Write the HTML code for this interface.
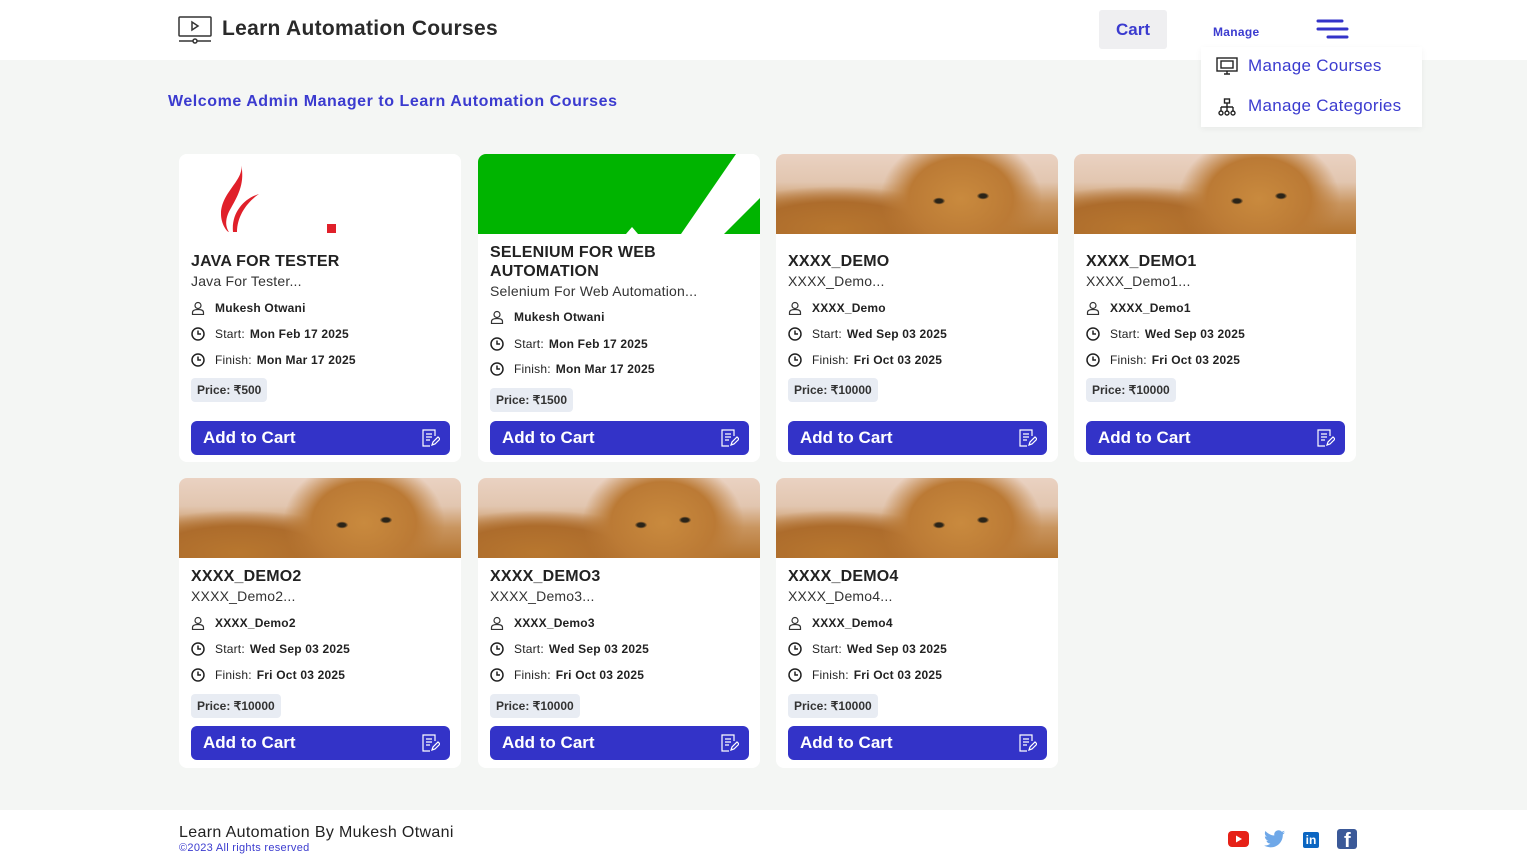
<!DOCTYPE html>
<html><head><meta charset="utf-8"><style>
*{box-sizing:border-box;margin:0;padding:0}
body{width:1527px;height:866px;background:#f4f6f4;font-family:"Liberation Sans",sans-serif;position:relative;overflow:hidden;color:#222}
.hdr{position:absolute;left:0;top:0;width:1527px;height:60px;background:#fff}
.logo{position:absolute;left:178px;top:16px}
.brand{position:absolute;left:222px;top:17px;font-size:21px;font-weight:bold;color:#2a2a2a;letter-spacing:0.3px}
.cart{position:absolute;left:1099px;top:10px;width:68px;height:39px;background:#efeff1;border-radius:3px;color:#3b3bcf;font-weight:bold;font-size:17px;text-align:center;line-height:39px}
.manage{position:absolute;left:1213px;top:25px;font-size:12px;color:#3b3bcf;font-weight:bold;letter-spacing:0.3px}
.ham{position:absolute;left:1316px;top:19px}
.dd{position:absolute;left:1201px;top:47px;width:221px;height:80px;background:#fff;box-shadow:0 2px 6px rgba(0,0,0,.05)}
.dd div{position:absolute;left:47px;font-size:17px;color:#3b3bcf;letter-spacing:0.3px}
.welcome{position:absolute;left:168px;top:93px;font-size:16px;font-weight:bold;color:#3b3bcf;letter-spacing:0.55px}
.card{position:absolute;width:282px;background:#fff;border-radius:8px;overflow:hidden}
.img{position:absolute;left:0;top:0;width:282px;height:80px}
.lion{background:
radial-gradient(ellipse 9px 5px at 163px 47px,#2b2418 40%,transparent 70%),
radial-gradient(ellipse 9px 5px at 207px 42px,#2b2418 40%,transparent 70%),
radial-gradient(ellipse 95px 75px at 185px 45px,#c98a3e 0%,#bb7a35 55%,transparent 85%),
radial-gradient(ellipse 140px 45px at 60px 75px,#b8772f 0%,#ad6c2c 60%,transparent 95%),
linear-gradient(180deg,#ead2c2 0%,#e2c6b0 35%,#c9955f 62%,#b4742f 100%);}
.t{position:absolute;left:12px;font-size:16px;font-weight:bold;color:#222;line-height:19px;letter-spacing:0.2px}
.s{position:absolute;left:12px;font-size:14px;color:#333;letter-spacing:0.2px}
.r{position:absolute;left:12px;font-size:12px;color:#222;display:flex;align-items:center;letter-spacing:0.2px}
.r svg{margin-right:10px}
.r b{margin-left:5px}
.p{position:absolute;left:12px;height:24px;background:#e8ecf3;border-radius:4px;font-size:12px;font-weight:bold;padding:0 6px;line-height:24px;color:#333}
.btn{position:absolute;left:12px;width:259px;height:34px;background:#3333c8;border-radius:6px;color:#fff;font-size:17px;font-weight:bold;line-height:34px;padding-left:12px}
.btn svg{position:absolute;right:10px;top:8px}
.ftr{position:absolute;left:0;top:810px;width:1527px;height:56px;background:#fff}
</style></head><body>
<div class="hdr"></div>
<svg class="logo" width="34" height="28" viewBox="0 0 34 28" fill="none" stroke="#333" stroke-width="1.5"><rect x="1" y="1" width="32" height="19" rx="1"/><path d="M14 6v8l6-4z"/><path d="M1 25h32"/><circle cx="17" cy="25" r="2" fill="#fff"/></svg>
<div class="brand">Learn Automation Courses</div>
<div class="cart">Cart</div>
<div class="manage">Manage</div>
<svg class="ham" width="33" height="20" viewBox="0 0 33 20" stroke="#3333c8" stroke-width="3" stroke-linecap="round"><path d="M2 2h24M2 10h29M12 18h19"/></svg>
<div class="dd">
<svg style="position:absolute;left:15px;top:10px" width="22" height="20" viewBox="0 0 22 20" fill="none" stroke="#222" stroke-width="1.4"><rect x="1" y="1" width="20" height="13"/><rect x="5" y="4" width="12" height="7"/><path d="M8 17h6M11 14v3"/></svg>
<div style="top:9px">Manage Courses</div>
<svg style="position:absolute;left:17px;top:51px" width="18" height="18" viewBox="0 0 18 18" fill="none" stroke="#222" stroke-width="1.4"><rect x="6.5" y="1" width="5" height="4"/><path d="M9 5v4M3 9h12M3 9v4M9 9v4M15 9v4"/><circle cx="3" cy="15" r="2"/><circle cx="9" cy="15" r="2"/><circle cx="15" cy="15" r="2"/></svg>
<div style="top:49px">Manage Categories</div>
</div>
<div class="welcome">Welcome Admin Manager to Learn Automation Courses</div>

<div class="card" style="left:179px;top:154px;height:308px">
<svg class="img" viewBox="0 0 282 80"><rect width="282" height="80" fill="#fff"/><path d="M62 10c4 16-20 28-20 50 0 10 6 18 8 18-4-6-4-14 2-24 8-14 14-26 10-44z" fill="#e0202a"/><path d="M80 40c-14 4-28 18-26 38l4 0c0-16 10-30 22-38z" fill="#e0202a"/><rect x="148" y="70" width="9" height="9" fill="#e0202a"/></svg>
<div class="t" style="top:98px">JAVA FOR TESTER</div><div class="s" style="top:119px">Java For Tester...</div>
<div class="r" style="top:147px"><svg width="14" height="14" viewBox="0 0 14 14" fill="none" stroke="#333" stroke-width="1.2"><circle cx="7" cy="4.5" r="3"/><path d="M1.5 13.5v-2c0-2 2-3 5.5-3s5.5 1 5.5 3v2z"/></svg><b style="margin-left:0">Mukesh Otwani</b></div>
<div class="r" style="top:173px"><svg width="14" height="14" viewBox="0 0 14 14" fill="none" stroke="#222" stroke-width="1.5"><circle cx="7" cy="7" r="6"/><path d="M7 3.5V7h3"/></svg>Start: <b>Mon Feb 17 2025</b></div>
<div class="r" style="top:199px"><svg width="14" height="14" viewBox="0 0 14 14" fill="none" stroke="#222" stroke-width="1.5"><circle cx="7" cy="7" r="6"/><path d="M7 3.5V7h3"/></svg>Finish: <b>Mon Mar 17 2025</b></div>
<div class="p" style="top:224px">Price: ₹500</div>
<div class="btn" style="top:267px">Add to Cart<svg width="18" height="18" viewBox="0 0 18 18" fill="none" stroke="#fff" stroke-width="1.2"><path d="M13 7V1H1v16h7"/><path d="M4 5h6M4 8h6M4 11h4"/><path d="M10 16l1-3 5-5 2 2-5 5z"/></svg></div>
</div>

<div class="card" style="left:478px;top:154px;height:308px">
<svg class="img" viewBox="0 0 282 80"><rect width="282" height="80" fill="#fff"/><polygon points="0,0 258,0 203,80 0,80" fill="#00b400"/><polygon points="246,80 282,44 282,80" fill="#00b400"/><polygon points="148,80 154,73 160,80" fill="#fff"/></svg>
<div class="t" style="top:89px">SELENIUM FOR WEB<br>AUTOMATION</div><div class="s" style="top:129px">Selenium For Web Automation...</div>
<div class="r" style="top:156px"><svg width="14" height="14" viewBox="0 0 14 14" fill="none" stroke="#333" stroke-width="1.2"><circle cx="7" cy="4.5" r="3"/><path d="M1.5 13.5v-2c0-2 2-3 5.5-3s5.5 1 5.5 3v2z"/></svg><b style="margin-left:0">Mukesh Otwani</b></div>
<div class="r" style="top:183px"><svg width="14" height="14" viewBox="0 0 14 14" fill="none" stroke="#222" stroke-width="1.5"><circle cx="7" cy="7" r="6"/><path d="M7 3.5V7h3"/></svg>Start: <b>Mon Feb 17 2025</b></div>
<div class="r" style="top:208px"><svg width="14" height="14" viewBox="0 0 14 14" fill="none" stroke="#222" stroke-width="1.5"><circle cx="7" cy="7" r="6"/><path d="M7 3.5V7h3"/></svg>Finish: <b>Mon Mar 17 2025</b></div>
<div class="p" style="top:234px">Price: ₹1500</div>
<div class="btn" style="top:267px">Add to Cart<svg width="18" height="18" viewBox="0 0 18 18" fill="none" stroke="#fff" stroke-width="1.2"><path d="M13 7V1H1v16h7"/><path d="M4 5h6M4 8h6M4 11h4"/><path d="M10 16l1-3 5-5 2 2-5 5z"/></svg></div>
</div>

<div class="card" style="left:776px;top:154px;height:308px"><div class="img lion"></div>
<div class="t" style="top:98px">XXXX_DEMO</div><div class="s" style="top:119px">XXXX_Demo...</div>
<div class="r" style="top:147px"><svg width="14" height="14" viewBox="0 0 14 14" fill="none" stroke="#333" stroke-width="1.2"><circle cx="7" cy="4.5" r="3"/><path d="M1.5 13.5v-2c0-2 2-3 5.5-3s5.5 1 5.5 3v2z"/></svg><b style="margin-left:0">XXXX_Demo</b></div>
<div class="r" style="top:173px"><svg width="14" height="14" viewBox="0 0 14 14" fill="none" stroke="#222" stroke-width="1.5"><circle cx="7" cy="7" r="6"/><path d="M7 3.5V7h3"/></svg>Start: <b>Wed Sep 03 2025</b></div>
<div class="r" style="top:199px"><svg width="14" height="14" viewBox="0 0 14 14" fill="none" stroke="#222" stroke-width="1.5"><circle cx="7" cy="7" r="6"/><path d="M7 3.5V7h3"/></svg>Finish: <b>Fri Oct 03 2025</b></div>
<div class="p" style="top:224px">Price: ₹10000</div>
<div class="btn" style="top:267px">Add to Cart<svg width="18" height="18" viewBox="0 0 18 18" fill="none" stroke="#fff" stroke-width="1.2"><path d="M13 7V1H1v16h7"/><path d="M4 5h6M4 8h6M4 11h4"/><path d="M10 16l1-3 5-5 2 2-5 5z"/></svg></div>
</div>

<div class="card" style="left:1074px;top:154px;height:308px"><div class="img lion"></div>
<div class="t" style="top:98px">XXXX_DEMO1</div><div class="s" style="top:119px">XXXX_Demo1...</div>
<div class="r" style="top:147px"><svg width="14" height="14" viewBox="0 0 14 14" fill="none" stroke="#333" stroke-width="1.2"><circle cx="7" cy="4.5" r="3"/><path d="M1.5 13.5v-2c0-2 2-3 5.5-3s5.5 1 5.5 3v2z"/></svg><b style="margin-left:0">XXXX_Demo1</b></div>
<div class="r" style="top:173px"><svg width="14" height="14" viewBox="0 0 14 14" fill="none" stroke="#222" stroke-width="1.5"><circle cx="7" cy="7" r="6"/><path d="M7 3.5V7h3"/></svg>Start: <b>Wed Sep 03 2025</b></div>
<div class="r" style="top:199px"><svg width="14" height="14" viewBox="0 0 14 14" fill="none" stroke="#222" stroke-width="1.5"><circle cx="7" cy="7" r="6"/><path d="M7 3.5V7h3"/></svg>Finish: <b>Fri Oct 03 2025</b></div>
<div class="p" style="top:224px">Price: ₹10000</div>
<div class="btn" style="top:267px">Add to Cart<svg width="18" height="18" viewBox="0 0 18 18" fill="none" stroke="#fff" stroke-width="1.2"><path d="M13 7V1H1v16h7"/><path d="M4 5h6M4 8h6M4 11h4"/><path d="M10 16l1-3 5-5 2 2-5 5z"/></svg></div>
</div>

<div class="card" style="left:179px;top:478px;height:290px"><div class="img lion"></div>
<div class="t" style="top:89px">XXXX_DEMO2</div><div class="s" style="top:110px">XXXX_Demo2...</div>
<div class="r" style="top:138px"><svg width="14" height="14" viewBox="0 0 14 14" fill="none" stroke="#333" stroke-width="1.2"><circle cx="7" cy="4.5" r="3"/><path d="M1.5 13.5v-2c0-2 2-3 5.5-3s5.5 1 5.5 3v2z"/></svg><b style="margin-left:0">XXXX_Demo2</b></div>
<div class="r" style="top:164px"><svg width="14" height="14" viewBox="0 0 14 14" fill="none" stroke="#222" stroke-width="1.5"><circle cx="7" cy="7" r="6"/><path d="M7 3.5V7h3"/></svg>Start: <b>Wed Sep 03 2025</b></div>
<div class="r" style="top:190px"><svg width="14" height="14" viewBox="0 0 14 14" fill="none" stroke="#222" stroke-width="1.5"><circle cx="7" cy="7" r="6"/><path d="M7 3.5V7h3"/></svg>Finish: <b>Fri Oct 03 2025</b></div>
<div class="p" style="top:216px">Price: ₹10000</div>
<div class="btn" style="top:248px">Add to Cart<svg width="18" height="18" viewBox="0 0 18 18" fill="none" stroke="#fff" stroke-width="1.2"><path d="M13 7V1H1v16h7"/><path d="M4 5h6M4 8h6M4 11h4"/><path d="M10 16l1-3 5-5 2 2-5 5z"/></svg></div>
</div>

<div class="card" style="left:478px;top:478px;height:290px"><div class="img lion"></div>
<div class="t" style="top:89px">XXXX_DEMO3</div><div class="s" style="top:110px">XXXX_Demo3...</div>
<div class="r" style="top:138px"><svg width="14" height="14" viewBox="0 0 14 14" fill="none" stroke="#333" stroke-width="1.2"><circle cx="7" cy="4.5" r="3"/><path d="M1.5 13.5v-2c0-2 2-3 5.5-3s5.5 1 5.5 3v2z"/></svg><b style="margin-left:0">XXXX_Demo3</b></div>
<div class="r" style="top:164px"><svg width="14" height="14" viewBox="0 0 14 14" fill="none" stroke="#222" stroke-width="1.5"><circle cx="7" cy="7" r="6"/><path d="M7 3.5V7h3"/></svg>Start: <b>Wed Sep 03 2025</b></div>
<div class="r" style="top:190px"><svg width="14" height="14" viewBox="0 0 14 14" fill="none" stroke="#222" stroke-width="1.5"><circle cx="7" cy="7" r="6"/><path d="M7 3.5V7h3"/></svg>Finish: <b>Fri Oct 03 2025</b></div>
<div class="p" style="top:216px">Price: ₹10000</div>
<div class="btn" style="top:248px">Add to Cart<svg width="18" height="18" viewBox="0 0 18 18" fill="none" stroke="#fff" stroke-width="1.2"><path d="M13 7V1H1v16h7"/><path d="M4 5h6M4 8h6M4 11h4"/><path d="M10 16l1-3 5-5 2 2-5 5z"/></svg></div>
</div>

<div class="card" style="left:776px;top:478px;height:290px"><div class="img lion"></div>
<div class="t" style="top:89px">XXXX_DEMO4</div><div class="s" style="top:110px">XXXX_Demo4...</div>
<div class="r" style="top:138px"><svg width="14" height="14" viewBox="0 0 14 14" fill="none" stroke="#333" stroke-width="1.2"><circle cx="7" cy="4.5" r="3"/><path d="M1.5 13.5v-2c0-2 2-3 5.5-3s5.5 1 5.5 3v2z"/></svg><b style="margin-left:0">XXXX_Demo4</b></div>
<div class="r" style="top:164px"><svg width="14" height="14" viewBox="0 0 14 14" fill="none" stroke="#222" stroke-width="1.5"><circle cx="7" cy="7" r="6"/><path d="M7 3.5V7h3"/></svg>Start: <b>Wed Sep 03 2025</b></div>
<div class="r" style="top:190px"><svg width="14" height="14" viewBox="0 0 14 14" fill="none" stroke="#222" stroke-width="1.5"><circle cx="7" cy="7" r="6"/><path d="M7 3.5V7h3"/></svg>Finish: <b>Fri Oct 03 2025</b></div>
<div class="p" style="top:216px">Price: ₹10000</div>
<div class="btn" style="top:248px">Add to Cart<svg width="18" height="18" viewBox="0 0 18 18" fill="none" stroke="#fff" stroke-width="1.2"><path d="M13 7V1H1v16h7"/><path d="M4 5h6M4 8h6M4 11h4"/><path d="M10 16l1-3 5-5 2 2-5 5z"/></svg></div>
</div>

<div class="ftr">
<div style="position:absolute;left:179px;top:14px;font-size:16px;color:#222;letter-spacing:0.35px">Learn Automation By Mukesh Otwani</div>
<div style="position:absolute;left:179px;top:32px;font-size:11px;color:#3b3bcf;letter-spacing:0.3px">©2023 All rights reserved</div>
<svg style="position:absolute;left:1228px;top:21px" width="21" height="16" viewBox="0 0 21 16"><rect width="21" height="16" rx="4" fill="#e62117"/><path d="M8 4.5v7l6-3.5z" fill="#fff"/></svg>
<svg style="position:absolute;left:1264px;top:20px" width="21" height="18" viewBox="0 0 24 20"><path d="M24 2.4c-.9.4-1.8.7-2.8.8 1-.6 1.8-1.6 2.2-2.7-1 .6-2 1-3.1 1.2C19.4.7 18.1 0 16.6 0c-2.7 0-4.9 2.2-4.9 4.9 0 .4 0 .8.1 1.1C7.7 5.8 4.1 3.9 1.700.9c-.4.7-.7 1.6-.7 2.5 0 1.7.9 3.200 2.2 4.1-.8 0-1.6-.2-2.2-.6v.1c0 2.4 1.7 4.4 3.9 4.8-.4.1-.8.2-1.3.2-.3 0-.6 0-.9-.1.6 2 2.4 3.4 4.6 3.4-1.7 1.3-3.8 2.1-6.1 2.1-.4 0-.8 0-1.2-.1 2.2 1.4 4.8 2.2 7.5 2.2 9.1 0 14-7.5 14-14v-.6c1-.7 1.8-1.6 2.5-2.5z" fill="#6fa8e8"/></svg>
<div style="position:absolute;left:1303px;top:22px;width:16px;height:16px;background:#0b66c2;color:#fff;font-size:12px;font-weight:bold;line-height:16px;text-align:center;border-radius:2px">in</div>
<div style="position:absolute;left:1337px;top:19px;width:20px;height:20px;background:#3b5998;border-radius:3px;overflow:hidden"><span style="position:absolute;left:7px;top:1px;color:#fff;font-size:20px;font-weight:bold;line-height:22px">f</span></div>
</div>
</body></html>
